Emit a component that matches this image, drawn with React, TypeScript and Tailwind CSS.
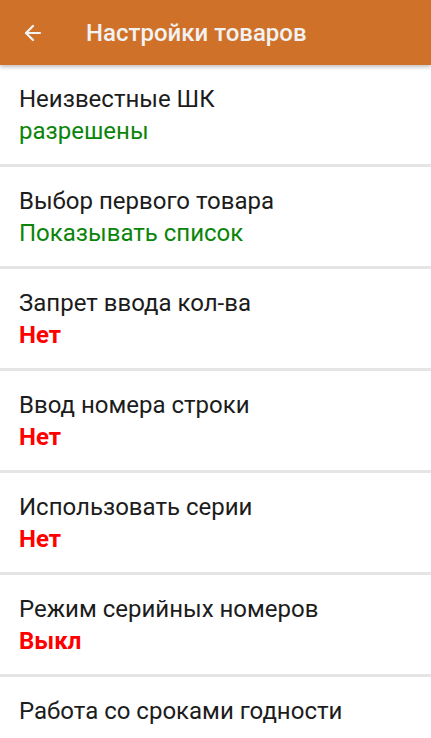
import { ArrowLeft } from "lucide-react";

type Setting = {
  title: string;
  value?: string;
  tone?: "ok" | "off";
};

const settings: Setting[] = [
  { title: "Неизвестные ШК", value: "разрешены", tone: "ok" },
  { title: "Выбор первого товара", value: "Показывать список", tone: "ok" },
  { title: "Запрет ввода кол-ва", value: "Нет", tone: "off" },
  { title: "Ввод номера строки", value: "Нет", tone: "off" },
  { title: "Использовать серии", value: "Нет", tone: "off" },
  { title: "Режим серийных номеров", value: "Выкл", tone: "off" },
  // value of the last row sits below the fold
  { title: "Работа со сроками годности" },
];

export default function App() {
  return (
    <div
      className="h-[738px] w-[431px] overflow-hidden bg-white"
      style={{ fontFamily: "Roboto, 'Noto Sans', sans-serif" }}
    >
      {/* Toolbar */}
      <header className="relative z-10 flex h-[65px] items-center bg-[#d0712a] shadow-[0_2px_4px_rgba(0,0,0,0.25)]">
        <div className="flex w-[86px] items-center pl-[21px]">
          <ArrowLeft size={24} strokeWidth={2.2} className="text-[#f4f4f4]" />
        </div>
        <h1 className="text-[24px] font-medium text-[#f2f2f2]">Настройки товаров</h1>
      </header>

      {/* Settings list */}
      <div className="flex flex-col">
        {settings.map((s) => (
          <div
            key={s.title}
            className={
              s.value
                ? "flex h-[102px] shrink-0 flex-col justify-center border-b-[3px] border-[#e5e5e5] px-[19px]"
                : "flex h-[102px] shrink-0 flex-col justify-start pt-[18px] px-[19px]"
            }
          >
            <div className="text-[24px] leading-[32px] text-[#1c1c1c]">{s.title}</div>
            {s.value && (
              <div
                className={
                  s.tone === "ok"
                    ? "text-[24px] leading-[32px] text-[#0a850a]"
                    : "text-[24px] font-bold leading-[32px] text-[#ff0000]"
                }
              >
                {s.value}
              </div>
            )}
          </div>
        ))}
      </div>
    </div>
  );
}
